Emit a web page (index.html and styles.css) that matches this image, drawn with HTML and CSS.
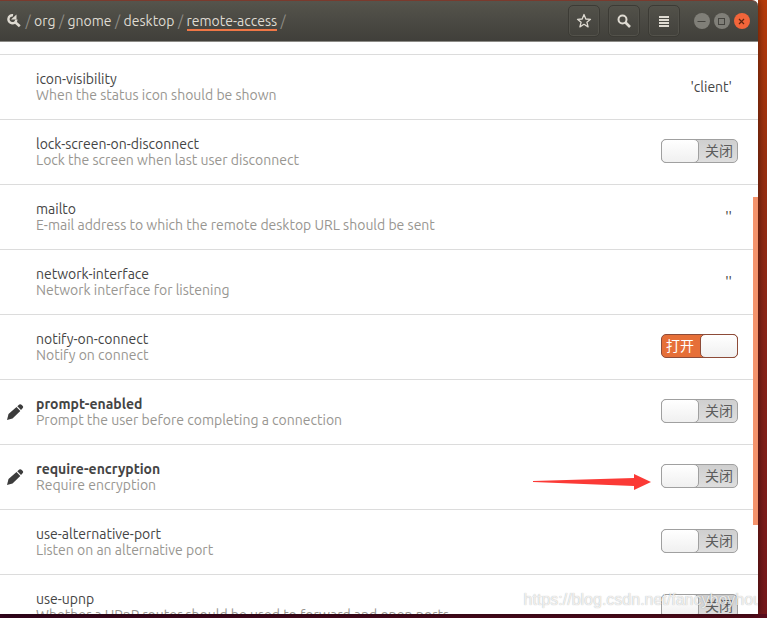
FILE: index.html
```html
<!DOCTYPE html>
<html lang="zh-CN">
<head>
  <meta charset="UTF-8" />
  <meta name="viewport" content="width=device-width, initial-scale=1" />
  <title>remote-access</title>
  <link rel="stylesheet" href="styles.css">
</head>
<body>
  <div class="window">

    <!-- Header bar -->
    <header class="header">
      <nav class="path">
        <svg class="path-icon" width="14" height="14" viewBox="0 0 14 14">
          <path d="M6 1.300A4 4 0 1 0 9.400 5.500" fill="none" stroke="#dfdbd2" stroke-width="2.400" />
          <path d="M4 5.500 9.500.500 9.500 5.500Z" fill="#dfdbd2" />
          <path d="M8 8 12.800 12.300" stroke="#dfdbd2" stroke-width="2.600" />
        </svg>
        <span class="slash">/</span><a href="#">org</a><span class="slash">/</span><a href="#">gnome</a><span class="slash">/</span><a href="#">desktop</a><span class="slash">/</span><a href="#" class="current">remote-access</a><span class="slash">/</span>
      </nav>
      <div class="tools">
        <button class="tool" aria-label="Bookmarks">
          <svg width="16" height="16" viewBox="0 0 16 16">
            <path d="M8 1.500 9.800 6 14.500 6.300 10.900 9.200 12.100 13.900 8 11.300 3.900 13.900 5.100 9.200 1.500 6.300 6.200 6Z" fill="none" stroke="#dfdbd2" stroke-width="1.300" stroke-linejoin="round" />
          </svg>
        </button>
        <button class="tool" aria-label="Search">
          <svg width="16" height="16" viewBox="0 0 16 16">
            <circle cx="6.500" cy="6.500" r="4" fill="none" stroke="#dfdbd2" stroke-width="2" />
            <path d="M9.500 9.500 14 14" stroke="#dfdbd2" stroke-width="2.600" />
          </svg>
        </button>
        <button class="tool" aria-label="Menu">
          <svg width="16" height="16" viewBox="0 0 16 16">
            <path d="M3 3h10v2H3zM3 6h10v2H3zM3 9h10v2H3zM3 12h10v2H3z" fill="#dfdbd2" />
          </svg>
        </button>
      </div>
      <div class="controls">
        <button class="control" aria-label="Minimize">
          <svg width="15" height="15" viewBox="0 0 15 15"><path d="M3.500 7.500h8" stroke="#45443f" /></svg>
        </button>
        <button class="control" aria-label="Maximize">
          <svg width="15" height="15" viewBox="0 0 15 15"><rect x="4.500" y="4.500" width="6" height="6" fill="none" stroke="#45443f" /></svg>
        </button>
        <button class="control close" aria-label="Close">
          <svg width="15" height="15" viewBox="0 0 15 15"><path d="M5 5l5 5M10 5l-5 5" stroke="#5a2410" stroke-width="1.200" /></svg>
        </button>
      </div>
    </header>

    <!-- Key list -->
    <main class="content">
      <ul class="keys">
        <li class="row">
          <div class="info"><div class="name">icon-visibility</div><div class="summary">When the status icon should be shown</div></div>
          <span class="value">'client'</span>
        </li>
        <li class="row">
          <div class="info"><label class="name" for="lock">lock-screen-on-disconnect</label><div class="summary">Lock the screen when last user disconnect</div></div>
          <label class="switch"><input type="checkbox" id="lock"><span>关闭</span></label>
        </li>
        <li class="row">
          <div class="info"><div class="name">mailto</div><div class="summary">E-mail address to which the remote desktop URL should be sent</div></div>
          <span class="value">''</span>
        </li>
        <li class="row">
          <div class="info"><div class="name">network-interface</div><div class="summary">Network interface for listening</div></div>
          <span class="value">''</span>
        </li>
        <li class="row">
          <div class="info"><label class="name" for="notify">notify-on-connect</label><div class="summary">Notify on connect</div></div>
          <label class="switch on"><input type="checkbox" id="notify" checked><span>打开</span></label>
        </li>
        <li class="row changed">
          <svg class="pencil" width="18" height="18" viewBox="0 0 18 18"><path d="M1 17 2.500 11 10.500 4 14.300 8 6.500 15.500ZM11.300 3.300 13.300 1.500Q14.500.700 15.500 1.700L16.800 3Q17.600 4 16.800 5L15 7Z" fill="#3c3c3c" /></svg>
          <div class="info"><label class="name" for="prompt">prompt-enabled</label><div class="summary">Prompt the user before completing a connection</div></div>
          <label class="switch"><input type="checkbox" id="prompt"><span>关闭</span></label>
        </li>
        <li class="row changed">
          <svg class="pencil" width="18" height="18" viewBox="0 0 18 18"><path d="M1 17 2.500 11 10.500 4 14.300 8 6.500 15.500ZM11.300 3.300 13.300 1.500Q14.500.700 15.500 1.700L16.800 3Q17.600 4 16.800 5L15 7Z" fill="#3c3c3c" /></svg>
          <div class="info"><label class="name" for="encryption">require-encryption</label><div class="summary">Require encryption</div></div>
          <svg class="arrow" width="118" height="16" viewBox="0 0 118 16"><path d="M0 7 101 4V0L118 8 101 16V12L0 8Z" fill="#fb3a36" /></svg>
          <label class="switch"><input type="checkbox" id="encryption"><span>关闭</span></label>
        </li>
        <li class="row">
          <div class="info"><label class="name" for="port">use-alternative-port</label><div class="summary">Listen on an alternative port</div></div>
          <label class="switch"><input type="checkbox" id="port"><span>关闭</span></label>
        </li>
        <li class="row">
          <div class="info"><label class="name" for="upnp">use-upnp</label><div class="summary">Whether a UPnP router should be used to forward and open ports</div></div>
          <label class="switch"><input type="checkbox" id="upnp"><span>关闭</span></label>
        </li>
      </ul>
      <div class="scrollbar"></div>
      <div class="watermark">https://blog.csdn.net/fancyboyhou</div>
    </main>
  </div>
</body>
</html>
```

FILE: styles.css
```css
* {
  box-sizing: border-box;
}

body {
  margin: 0;
  height: 100vh;
  padding: 0 9px 4px 0;
  overflow: hidden;
  background:
    linear-gradient(90deg, #38051f, #5a0c1c) bottom / 100% 4px no-repeat,
    linear-gradient(#b83c0b, #9a3010 25%, #8a2418 55%, #75171b);
  font-family: Ubuntu, "Noto Sans", "Noto Sans CJK SC", sans-serif;
  font-size: 14px;
  color: #444;
}

.window {
  display: flex;
  flex-direction: column;
  height: 100%;
  background: #fff;
  box-shadow: 0 0 8px rgba(0, 0, 0, 0.6);
}

/* Header bar */
.header {
  display: flex;
  flex: none;
  align-items: center;
  height: 42px;
  padding: 0 8px 0 7px;
  background: linear-gradient(#55544c, #403f3a);
  border-top: 1px solid #7a3a2d;
  border-bottom: 1px solid #8c8b87;
  border-radius: 0 6px 0 0;
}

.path {
  display: flex;
  flex: 1;
  align-items: center;
  line-height: 16px;
}

.path-icon {
  margin-right: 1px;
}

.path a {
  padding-top: 2px;
  color: #dfdbd2;
  text-decoration: none;
  border-bottom: 2px solid transparent;
}

.path a.current {
  border-color: #f07746;
}

.slash {
  width: 12px;
  text-align: center;
  color: #8f8d86;
}

.tools {
  display: flex;
  gap: 8px;
  margin-right: 14px;
}

.tool {
  display: flex;
  align-items: center;
  justify-content: center;
  width: 32px;
  height: 32px;
  padding: 0;
  background: transparent;
  border: 1px solid #3c3b35;
  border-radius: 5px;
  box-shadow: inset 0 0 0 1px #53524b;
}

.controls {
  display: flex;
  gap: 4px;
}

.control {
  width: 16px;
  height: 16px;
  padding: 0;
  background: #807f78;
  border: 0;
  border-radius: 50%;
}

.control svg {
  display: block;
}

.control.close {
  background: #f2653a;
}

/* Key list */
.content {
  position: relative;
  flex: 1;
  min-height: 0;
  overflow: hidden;
}

.keys {
  margin: 0;
  padding: 12px 0 0;
  list-style: none;
}

.row {
  position: relative;
  display: flex;
  align-items: center;
  height: 65px;
  padding: 0 20px 0 36px;
  border-top: 1px solid #dcdcdc;
}

.info {
  flex: 1;
  line-height: 16px;
}

.name {
  display: block;
}

.summary {
  color: #989691;
}

.changed .name {
  font-weight: bold;
}

.value {
  padding-right: 6px;
}

.pencil {
  position: absolute;
  left: 6px;
}

.arrow {
  position: absolute;
  right: 107px;
  top: 29px;
}

.switch {
  position: relative;
  display: flex;
  justify-content: flex-end;
  width: 77px;
  height: 24px;
  margin-bottom: 2px;
  padding: 0 4px;
  background: linear-gradient(#cfcfcf, #dedede);
  border: 1px solid #a0a0a0;
  border-radius: 5px;
  color: #5c5c5c;
  line-height: 22px;
}

.switch input {
  position: absolute;
  top: -1px;
  left: -1px;
  width: 38px;
  height: 24px;
  margin: 0;
  appearance: none;
  background: linear-gradient(#fff, #f0f0f0);
  border: 1px solid #a0a0a0;
  border-radius: 5px;
}

.switch.on {
  justify-content: flex-start;
  background: #e66f38;
  border-color: #8d4b38;
  color: #fff;
}

.switch.on input {
  left: auto;
  right: -1px;
  border-color: #8d4b38;
}

.scrollbar {
  position: absolute;
  top: 155px;
  right: 0;
  width: 5px;
  height: 328px;
  background: #f4936c;
}

.watermark {
  position: absolute;
  right: -4px;
  bottom: 4px;
  font-family: "Liberation Sans", sans-serif;
  font-size: 16px;
  line-height: 20px;
  color: rgba(255, 255, 255, 0.8);
  text-shadow: 0 0 1px rgba(0, 0, 0, 0.35);
}
```
